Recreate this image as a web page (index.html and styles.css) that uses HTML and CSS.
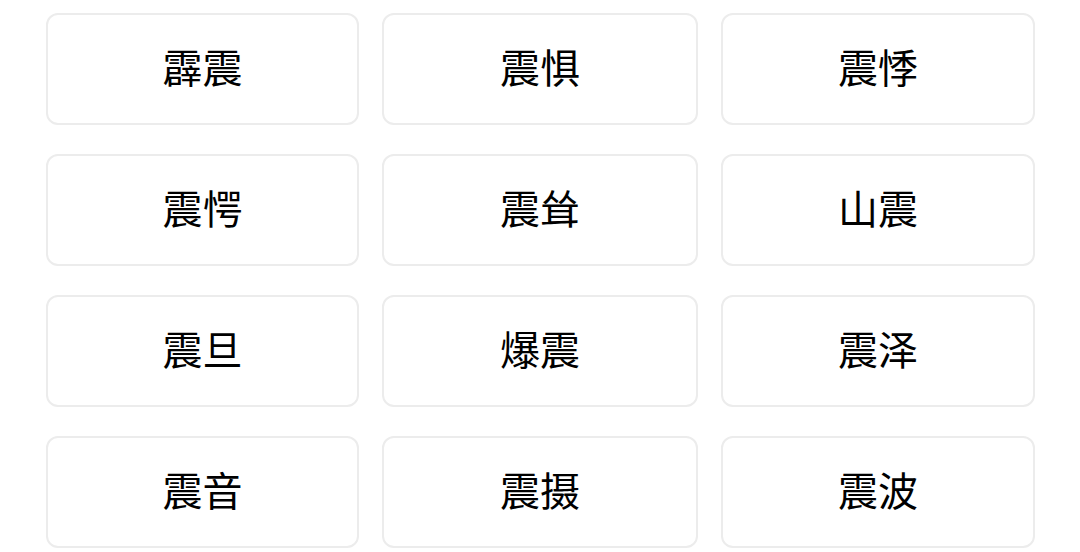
FILE: index.html
```html
<!DOCTYPE html>
<html lang="zh-CN">
<head>
<meta charset="utf-8">
<link rel="stylesheet" href="styles.css">
</head>
<body>
<div class="grid">
  <div class="card">霹震</div>
  <div class="card">震惧</div>
  <div class="card">震悸</div>
  <div class="card">震愕</div>
  <div class="card">震耸</div>
  <div class="card">山震</div>
  <div class="card">震旦</div>
  <div class="card">爆震</div>
  <div class="card">震泽</div>
  <div class="card">震音</div>
  <div class="card">震摄</div>
  <div class="card">震波</div>
</div>
</body>
</html>
```
FILE: styles.css
```css
html, body {
  margin: 0;
  background: #ffffff;
}
body {
  width: 1080px;
  height: 552px;
  overflow: hidden;
  font-family: "Noto Sans CJK SC", "Noto Sans", sans-serif;
}
.grid {
  display: grid;
  grid-template-columns: 313px 316px 314px;
  column-gap: 23px;
  row-gap: 29px;
  padding: 13px 0 0 46px;
}
.card {
  box-sizing: border-box;
  height: 112px;
  border: 2px solid #ececec;
  border-radius: 12px;
  display: flex;
  align-items: center;
  justify-content: center;
  font-size: 40px;
  color: #000000;
  padding-bottom: 7px;
}
```
